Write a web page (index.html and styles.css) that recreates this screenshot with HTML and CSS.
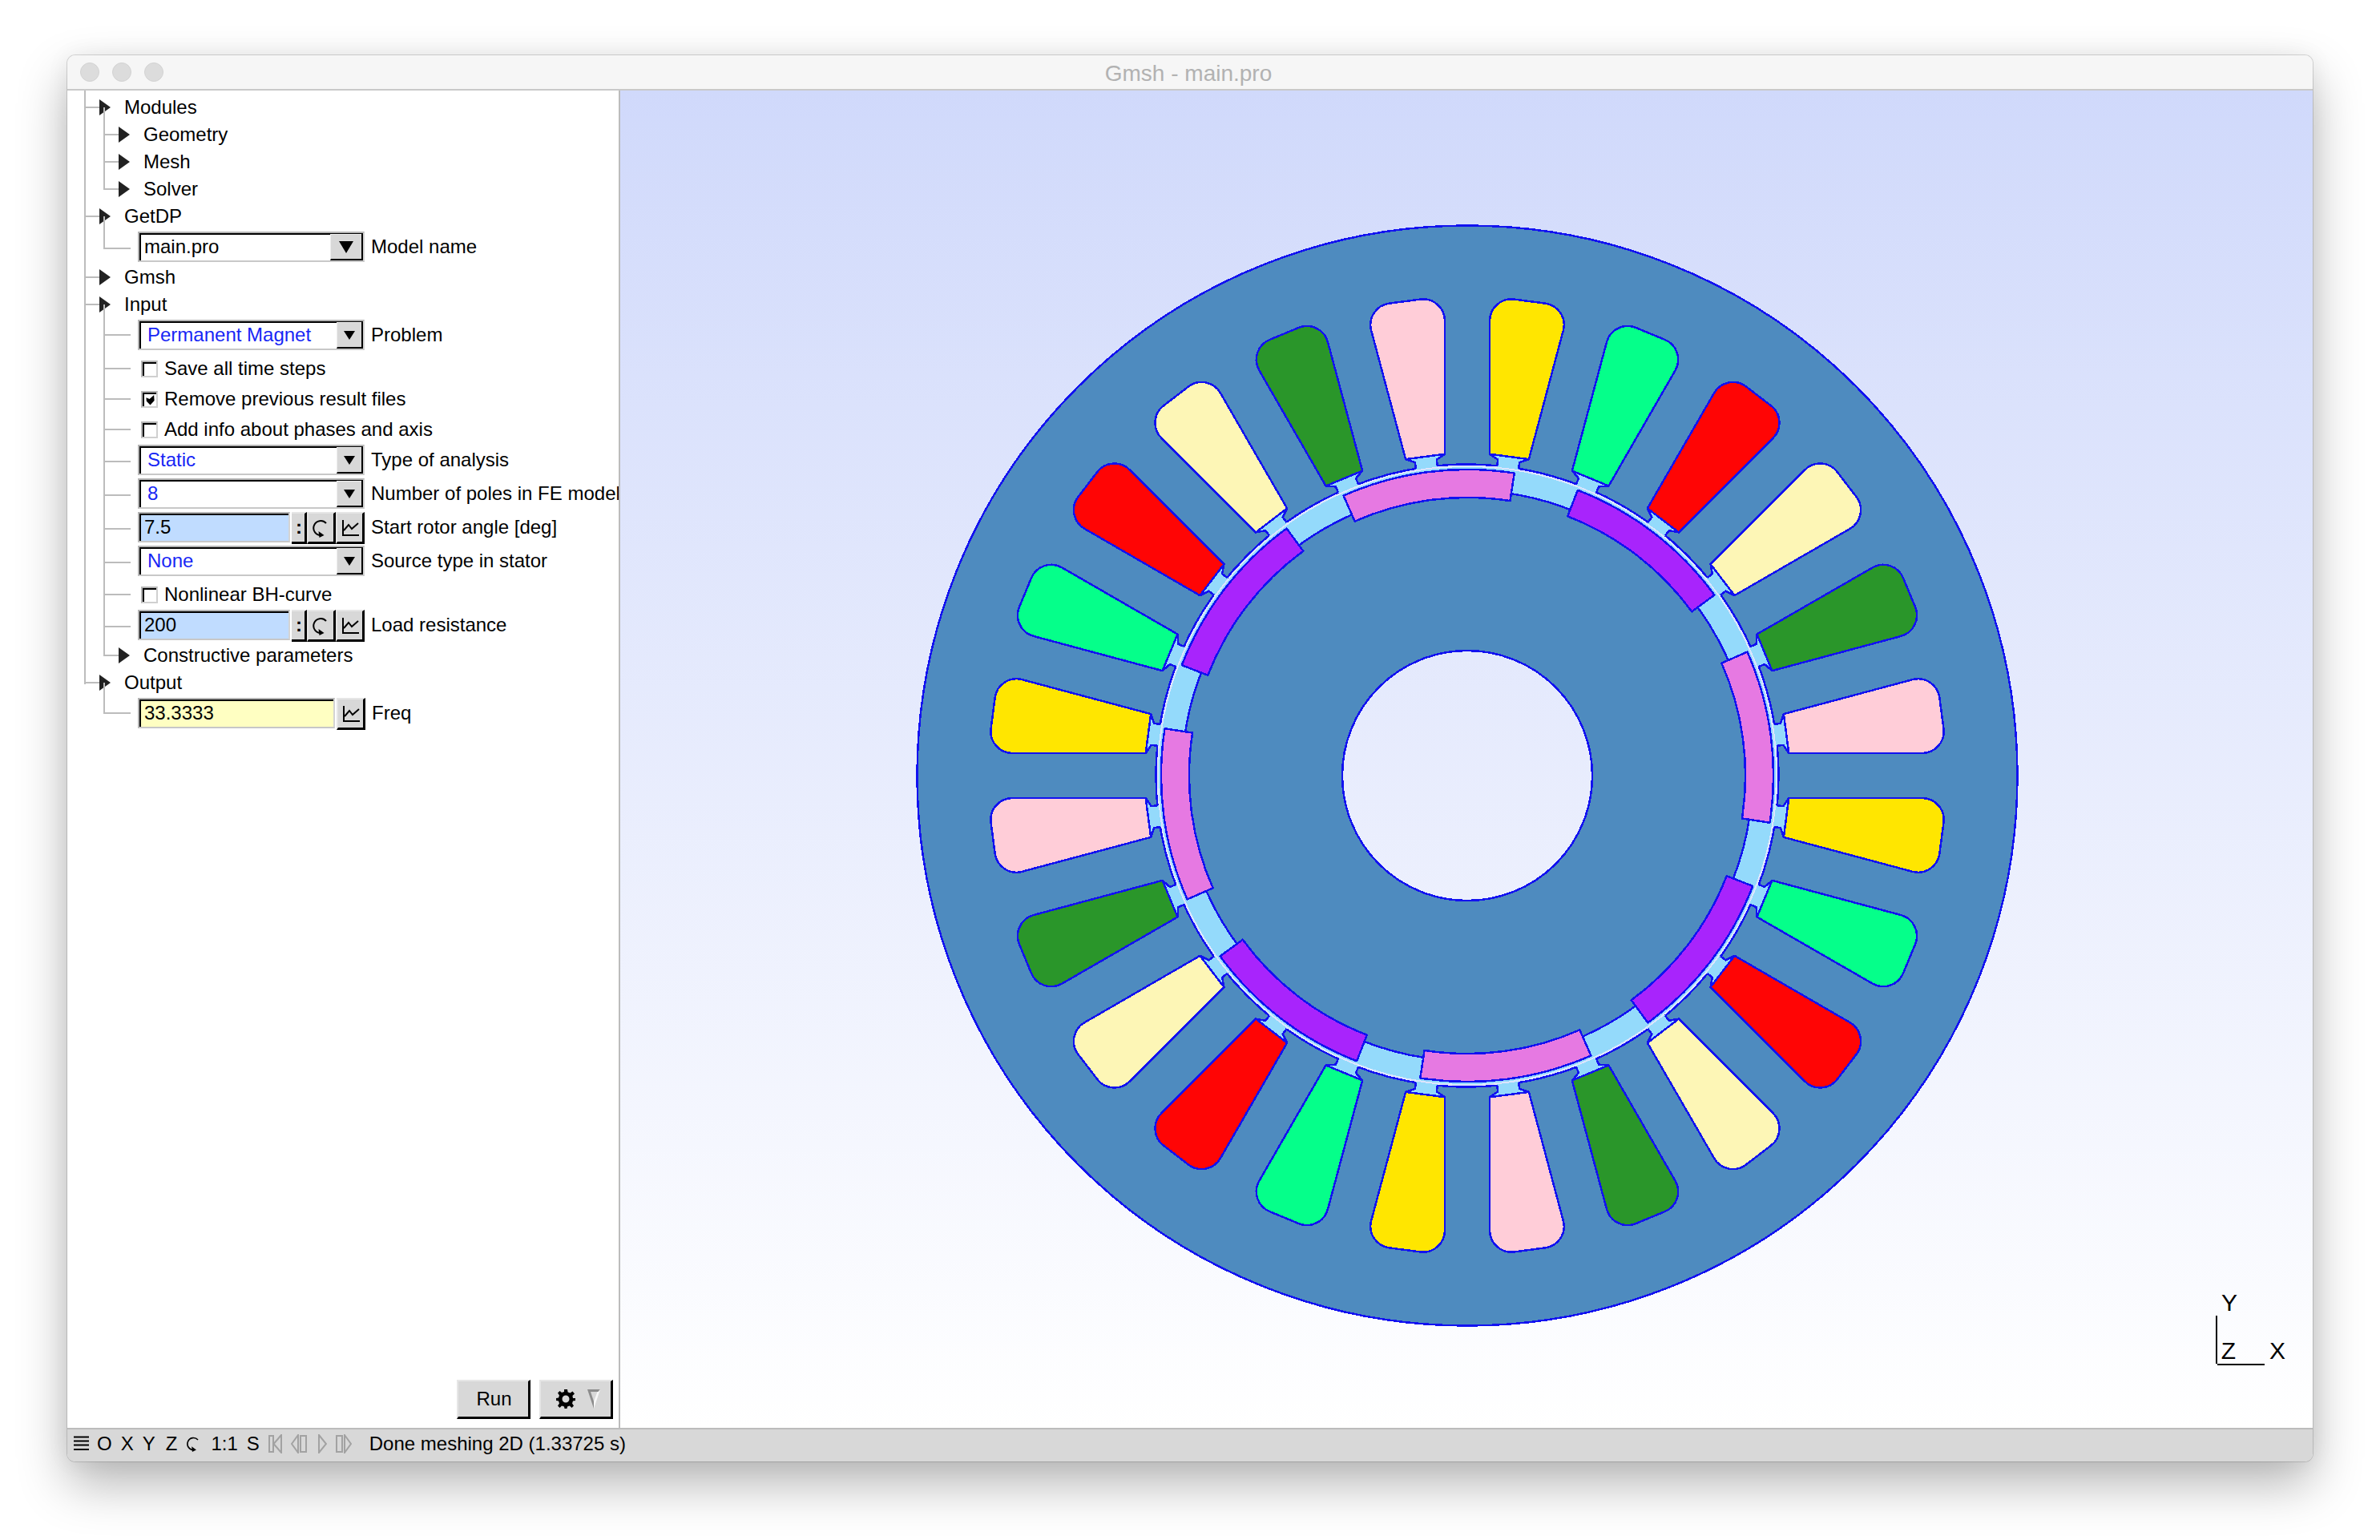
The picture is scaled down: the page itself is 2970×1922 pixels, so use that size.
FILE: index.html
```html
<!DOCTYPE html>
<html lang="en">
<head>
<meta charset="utf-8">
<title>Gmsh - main.pro</title>
<link rel="stylesheet" href="styles.css">
</head>
<body>
<svg class="defs" width="0" height="0" aria-hidden="true">
  <symbol id="i-reload" viewBox="0 0 24 24"><path class="ln" d="M18 6A9 9 0 1 0 12 21"/><path class="fl" d="M8.500 16L15.500 21L9.500 24Z"/></symbol>
  <symbol id="i-graph" viewBox="0 0 24 24"><path class="ln" d="M3 2V21H23M4 15L10 8L14 13L22 6"/></symbol>
</svg>
<div class="window">
  <header class="titlebar">
    <div class="lights"><i></i><i></i><i></i></div>
    <div class="title">Gmsh - main.pro</div>
  </header>
  <div class="main">
    <aside class="panel">
      <div class="tree">
        <div class="group">
          <div class="row head"><i class="arrow"></i>Modules</div>
          <div class="children">
            <div class="row sub"><i class="arrow"></i>Geometry</div>
            <div class="row sub"><i class="arrow"></i>Mesh</div>
            <div class="row sub"><i class="arrow"></i>Solver</div>
          </div>
        </div>
        <div class="group">
          <div class="row head"><i class="arrow"></i>GetDP</div>
          <div class="children wend">
            <div class="row wrow model">
              <div class="box choice"><span class="val black">main.pro</span><span class="drop big"><i></i></span></div>
              <span class="lab">Model name</span>
            </div>
          </div>
        </div>
        <div class="group">
          <div class="row head"><i class="arrow"></i>Gmsh</div>
        </div>
        <div class="group">
          <div class="row head"><i class="arrow"></i>Input</div>
          <div class="children">
            <div class="row wrow problem">
              <div class="box choice"><span class="val">Permanent Magnet</span><span class="drop"><i></i></span></div>
              <span class="lab">Problem</span>
            </div>
            <div class="row crow"><span class="check"></span>Save all time steps</div>
            <div class="row crow"><span class="check"><svg viewBox="0 0 14 14"><path d="M1.500 4L6 6L12 0.500L12.500 8L7 14L2 9Z"/></svg></span>Remove previous result files</div>
            <div class="row crow"><span class="check"></span>Add info about phases and axis</div>
            <div class="row wrow">
              <div class="box choice"><span class="val">Static</span><span class="drop"><i></i></span></div>
              <span class="lab">Type of analysis</span>
            </div>
            <div class="row wrow">
              <div class="box choice"><span class="val">8</span><span class="drop"><i></i></span></div>
              <span class="lab">Number of poles in FE model</span>
            </div>
            <div class="row wrow">
              <div class="box input">7.5</div>
              <span class="up btn-colon">:</span>
              <span class="up btn-ic"><svg><use href="#i-reload"/></svg></span>
              <span class="up btn-ic"><svg><use href="#i-graph"/></svg></span>
              <span class="lab tight">Start rotor angle [deg]</span>
            </div>
            <div class="row wrow">
              <div class="box choice"><span class="val">None</span><span class="drop"><i></i></span></div>
              <span class="lab">Source type in stator</span>
            </div>
            <div class="row crow"><span class="check"></span>Nonlinear BH-curve</div>
            <div class="row wrow res">
              <div class="box input">200</div>
              <span class="up btn-colon">:</span>
              <span class="up btn-ic"><svg><use href="#i-reload"/></svg></span>
              <span class="up btn-ic"><svg><use href="#i-graph"/></svg></span>
              <span class="lab tight">Load resistance</span>
            </div>
            <div class="row sub"><i class="arrow"></i>Constructive parameters</div>
          </div>
        </div>
        <div class="group">
          <div class="row head"><i class="arrow"></i>Output</div>
          <div class="children wend">
            <div class="row wrow out">
              <div class="box input output">33.3333</div>
              <span class="up btn-ic"><svg><use href="#i-graph"/></svg></span>
              <span class="lab tight">Freq</span>
            </div>
          </div>
        </div>
      </div>
      <div class="actions">
        <button class="up action run">Run</button>
        <button class="up action tools">
          <svg class="gear" viewBox="0 0 24 24"><path d="M10 0H14L14.600 3.500L17.500 4.600L20.500 2.600L23 5.500L20.400 8L21 11H24V14L21 14.500L20 17.500L22 20.500L19.500 23L16.800 20.500L14 21.500L13.500 24H10.500L10 21.500L7 20.500L4.500 23L2 20.500L4 17.500L3 14.500L0 14V11L3 10.500L4 7.500L2 4.500L4.500 2L7 4L10 3Z M12 7.500A4.500 4.500 0 1 0 12 16.500A4.500 4.500 0 1 0 12 7.500Z"/></svg>
          <svg class="tri" viewBox="0 0 16 24"><path class="tri-d" d="M0 0H16L13.500 3H4L8 15V24Z"/><path class="tri-l" d="M16 0L8 24V15L12.500 3H13.500Z"/></svg>
        </button>
      </div>
    </aside>
    <section class="viewer">
      <svg class="scene" viewBox="0 0 2112 1669" role="img" aria-label="Permanent magnet machine mesh">
        <defs>
          <g id="slot">
            <path class="neck" d="M386 -13.300H396L401.500 -24.700V24.700L396 13.300H386Z"/>
            <path class="edge" d="M388 -13.600H396L401.500 -24.700M388 13.600H396L401.500 24.700"/>
            <path class="outline" d="M401.500 -24.700L566.500 -46.300A27 27 0 0 1 597 -19.600L597 19.600A27 27 0 0 1 566.500 46.300L401.500 24.700Z"/>
          </g>
          <path id="magnet" class="outline" d="M333 -97.700L366.600 -107.500A382 382 0 0 1 366.600 107.500L333 97.700A347 347 0 0 0 333 -97.700Z"/>
        </defs>
        <g class="machine" transform="translate(1057 855)">
          <path class="stator outline" d="M-686.500 0A686.500 686.500 0 1 0 686.500 0A686.500 686.500 0 1 0 -686.500 0ZM-388.500 0A388.500 388.500 0 1 0 388.500 0A388.500 388.500 0 1 0 -388.500 0Z"/>
          <use href="#slot" class="c1" transform="rotate(-82.500)"/>
          <use href="#slot" class="c2" transform="rotate(-67.500)"/>
          <use href="#slot" class="c3" transform="rotate(-52.500)"/>
          <use href="#slot" class="c4" transform="rotate(-37.500)"/>
          <use href="#slot" class="c5" transform="rotate(-22.500)"/>
          <use href="#slot" class="c6" transform="rotate(-7.500)"/>
          <use href="#slot" class="c1" transform="rotate(7.500)"/>
          <use href="#slot" class="c2" transform="rotate(22.500)"/>
          <use href="#slot" class="c3" transform="rotate(37.500)"/>
          <use href="#slot" class="c4" transform="rotate(52.500)"/>
          <use href="#slot" class="c5" transform="rotate(67.500)"/>
          <use href="#slot" class="c6" transform="rotate(82.500)"/>
          <use href="#slot" class="c1" transform="rotate(97.500)"/>
          <use href="#slot" class="c2" transform="rotate(112.500)"/>
          <use href="#slot" class="c3" transform="rotate(127.500)"/>
          <use href="#slot" class="c4" transform="rotate(142.500)"/>
          <use href="#slot" class="c5" transform="rotate(157.500)"/>
          <use href="#slot" class="c6" transform="rotate(172.500)"/>
          <use href="#slot" class="c1" transform="rotate(187.500)"/>
          <use href="#slot" class="c2" transform="rotate(202.500)"/>
          <use href="#slot" class="c3" transform="rotate(217.500)"/>
          <use href="#slot" class="c4" transform="rotate(232.500)"/>
          <use href="#slot" class="c5" transform="rotate(247.500)"/>
          <use href="#slot" class="c6" transform="rotate(262.500)"/>
          <circle class="air-ring" r="370.500"/>
          <circle class="gap-line" r="386"/>
          <path class="stator outline" d="M-356 0A356 356 0 1 0 356 0A356 356 0 1 0 -356 0ZM-156 0A156 156 0 1 0 156 0A156 156 0 1 0 -156 0Z"/>
          <use href="#magnet" class="m1" transform="rotate(-97.500)"/>
          <use href="#magnet" class="m2" transform="rotate(-52.500)"/>
          <use href="#magnet" class="m1" transform="rotate(-7.500)"/>
          <use href="#magnet" class="m2" transform="rotate(37.500)"/>
          <use href="#magnet" class="m1" transform="rotate(82.500)"/>
          <use href="#magnet" class="m2" transform="rotate(127.500)"/>
          <use href="#magnet" class="m1" transform="rotate(172.500)"/>
          <use href="#magnet" class="m2" transform="rotate(217.500)"/>
        </g>
        <path class="axis" d="M1992 1529V1589M1993 1590H2052"/>
        <text class="axis-label" x="2008" y="1523">Y</text>
        <text class="axis-label" x="2007" y="1583">Z</text>
        <text class="axis-label" x="2068" y="1583">X</text>
      </svg>
    </section>
  </div>
  <footer class="status">
    <svg class="st-ham" viewBox="0 0 19 20"><path d="M0 1.500H19M0 6.500H19M0 11.500H19M0 17H19"/></svg>
    <span>O</span><span>X</span><span>Y</span><span class="st-z">Z</span>
    <svg class="st-reload"><use href="#i-reload"/></svg>
    <span>1:1</span><span>S</span>
    <svg class="st-nav st-first" viewBox="0 0 17 24"><path d="M1 2H6V22H1ZM16 1L6.500 12L16 23Z"/></svg>
    <svg class="st-nav st-prev" viewBox="0 0 20 24"><path d="M9 1L1 12L9 23ZM12 2H19V22H12Z"/></svg>
    <svg class="st-nav st-play" viewBox="0 0 11 24"><path d="M1 1L10 12L1 23Z"/></svg>
    <svg class="st-nav st-next" viewBox="0 0 20 24"><path d="M1 2H8V22H1ZM11 1L19 12L11 23Z"/></svg>
    <span class="st-msg">Done meshing 2D (1.33725 s)</span>
  </footer>
</div>
</body>
</html>
```
FILE: styles.css
```css
* { box-sizing: border-box; }
html, body { margin: 0; padding: 0; background: #fff; }
body {
  width: 2970px;
  height: 1922px;
  padding: 69px 84px 0;
  overflow: hidden;
  font-family: "Liberation Sans", Arial, sans-serif;
  font-size: 24px;
  color: #000;
}
.defs { position: absolute; }
.window {
  width: 2802px;
  height: 1755px;
  display: flex;
  flex-direction: column;
  border-radius: 10px;
  overflow: hidden;
  box-shadow: 0 0 0 1px rgba(0,0,0,.14), 0 28px 62px rgba(0,0,0,.29), 0 0 30px rgba(0,0,0,.06);
}

.titlebar {
  height: 44px;
  flex: none;
  background: #f6f6f6;
  border-bottom: 2px solid #c9c9c9;
  display: flex;
  align-items: center;
  position: relative;
}
.lights { display: flex; gap: 16px; padding-left: 16px; }
.lights i { width: 24px; height: 24px; border-radius: 50%; background: #dcdcdc; border: 1px solid #d2d2d2; }
.title {
  position: absolute;
  left: 0; right: 4px;
  top: 7px;
  text-align: center;
  color: #b2b2b2;
  font-size: 28px;
}

.main { flex: 1; display: flex; min-height: 0; }
.panel {
  width: 690px;
  flex: none;
  background: #fff;
  border-right: 2px solid #bcbcbc;
  display: flex;
  flex-direction: column;
  overflow: hidden;
}
.tree { padding-top: 4px; flex: 1; }
.group { position: relative; }
.group::before {
  content: "";
  position: absolute;
  left: 21px; top: -4px; bottom: 0;
  width: 2px;
  background: #bcbcbc;
}
.group:last-child::before { bottom: auto; height: 23px; }
.children { position: relative; }
.children::before {
  content: "";
  position: absolute;
  left: 45px; top: -17px; bottom: 17px;
  width: 2px;
  background: #bcbcbc;
}
.children.wend::before { bottom: 19px; }

.row {
  position: relative;
  display: flex;
  align-items: center;
  white-space: nowrap;
}
.row::before {
  content: "";
  position: absolute;
  top: 16px;
  height: 2px;
  background: #bcbcbc;
}
.head { height: 34px; padding-left: 40px; }
.head::before { left: 21px; width: 19px; }
.sub { height: 34px; padding-left: 64px; }
.sub::before { left: 45px; width: 19px; }
.arrow {
  flex: none;
  width: 0; height: 0;
  margin-right: 17px;
  border-style: solid;
  border-width: 10.500px 0 10.500px 14px;
  border-color: transparent transparent transparent #222;
}
.wrow { height: 42px; padding-left: 88px; align-items: flex-start; }
.wrow::before { left: 45px; width: 34px; top: 20px; }
.model { padding-top: 2px; }
.model::before { top: 22px; }
.problem { height: 44px; padding-top: 2px; }
.res { height: 40px; }
.out { height: 39px; padding-top: 2px; }
.crow { height: 38px; padding-left: 92px; }
.crow::before { left: 45px; width: 34px; top: 18px; }

.box {
  height: 38px;
  flex: none;
  border: 2px solid;
  border-color: #b4b4b4 #d4d4d4 #c8c8c8 #b4b4b4;
  background: #fff;
  display: flex;
  align-items: center;
  box-shadow: inset 2px 2px 0 #000;
}
.choice { width: 283px; position: relative; box-shadow: inset 2px 2px 0 #000, inset -2px 0 0 #000; }
.val { padding-left: 10px; color: #1726f5; flex: 1; }
.val.black { color: #000; padding-left: 6px; }
.drop {
  width: 31px;
  height: 33px;
  margin: 1px 2px 0 0;
  background: #d8d8d8;
  border-bottom: 2px solid #000;
  border-top: 1px solid #eee;
  border-left: 1px solid #eee;
  display: flex;
  align-items: center;
  justify-content: center;
}
.drop i {
  width: 0; height: 0;
  border-style: solid;
  border-width: 11px 7px 0;
  border-color: #000 transparent transparent;
}
.drop.big { width: 39px; }
.drop.big i { border-width: 15px 9px 0; }
.lab { margin-left: 8px; line-height: 38px; }
.lab.tight { margin-left: 8px; }
.input {
  width: 190px;
  padding-left: 6px;
  background: #c0dcff;
}
.input.output { width: 246px; background: #ffffc2; }
.up {
  background: #d8d8d8;
  border-style: solid;
  border-width: 2px 3px 3px 2px;
  border-color: #e6e6e6 #000 #000 #e6e6e6;
}
.btn-colon {
  width: 19px;
  height: 40px;
  margin-left: 2px;
  flex: none;
  line-height: 34px;
  text-align: center;
  border-left-width: 0;
  font-size: 24px;
  font-weight: 700;
  padding-left: 2px;
}
.btn-ic {
  width: 36px;
  height: 40px;
  flex: none;
  display: flex;
  align-items: center;
  justify-content: center;
}
.out .btn-ic { margin-left: 2px; }
.btn-ic svg { width: 24px; height: 24px; }
.ln { fill: none; stroke: #000; stroke-width: 2; }
.fl { fill: #000; }
.check {
  width: 21px; height: 21px;
  margin-right: 8px;
  flex: none;
  border: 2px solid;
  border-color: #b4b4b4 #d0d0d0 #d0d0d0 #b4b4b4;
  background: #fff;
  box-shadow: inset 2px 2px 0 #000;
  display: flex;
  padding: 2px 1px 1px 3px;
}
.check svg { width: 100%; height: 100%; display: block; }

.actions {
  flex: none;
  display: flex;
  justify-content: flex-end;
  gap: 11px;
  padding: 0 7px 11px 0;
}
.action {
  width: 92px;
  height: 49px;
  padding: 0;
  font: inherit;
  color: #000;
  display: flex;
  align-items: center;
  justify-content: center;
  gap: 14px;
}
.run { padding-left: 2px; }
.tools { padding-left: 7px; }
.gear { width: 24px; height: 24px; }
.tri { width: 18px; height: 24px; }
.tri-d { fill: #8c8c8c; }
.tri-l { fill: #f8f8f8; }

.viewer {
  flex: 1;
  min-width: 0;
  background: linear-gradient(#d0d9fb, #fff);
}
.scene { display: block; width: 100%; height: 100%; }
.machine { shape-rendering: crispEdges; }
.outline { stroke: #1212f0; stroke-width: 2.500; stroke-linejoin: round; }
.edge { fill: none; stroke: #1212f0; stroke-width: 2.500; }
.neck { fill: #94dafb; }
.stator { fill: #4e8bbf; fill-rule: evenodd; }
.air-ring { fill: none; stroke: #94dafb; stroke-width: 29; }
.gap-line { fill: none; stroke: #dce5fd; stroke-width: 2; }
.c1 { fill: #ffe600; }
.c2 { fill: #05ff8a; }
.c3 { fill: #ff0505; }
.c4 { fill: #fdf6b6; }
.c5 { fill: #2a962a; }
.c6 { fill: #ffcdd8; }
.m1 { fill: #e679e2; }
.m2 { fill: #a824fc; }
.axis { fill: none; stroke: #000; stroke-width: 2; }
.axis-label { font-size: 30px; text-anchor: middle; fill: #000; }

.status {
  height: 42px;
  flex: none;
  background: #d8d8d8;
  border-top: 2px solid #bcbcbc;
  display: flex;
  align-items: center;
  padding: 0 0 4px 8px;
  gap: 11px;
  white-space: nowrap;
}
.st-ham { width: 19px; height: 20px; flex: none; margin-right: -1px; }
.st-ham path { stroke: #000; stroke-width: 2; fill: none; }
.st-z { margin-left: 2px; }
.st-reload { width: 20px; height: 24px; flex: none; }
.st-nav { height: 24px; flex: none; }
.st-nav path { fill: none; stroke: #a2a2a2; stroke-width: 2; }
.st-first { width: 17px; }
.st-prev { width: 20px; }
.st-play { width: 11px; margin-left: 3px; }
.st-next { width: 20px; }
.st-msg { margin-left: 11px; }
```
